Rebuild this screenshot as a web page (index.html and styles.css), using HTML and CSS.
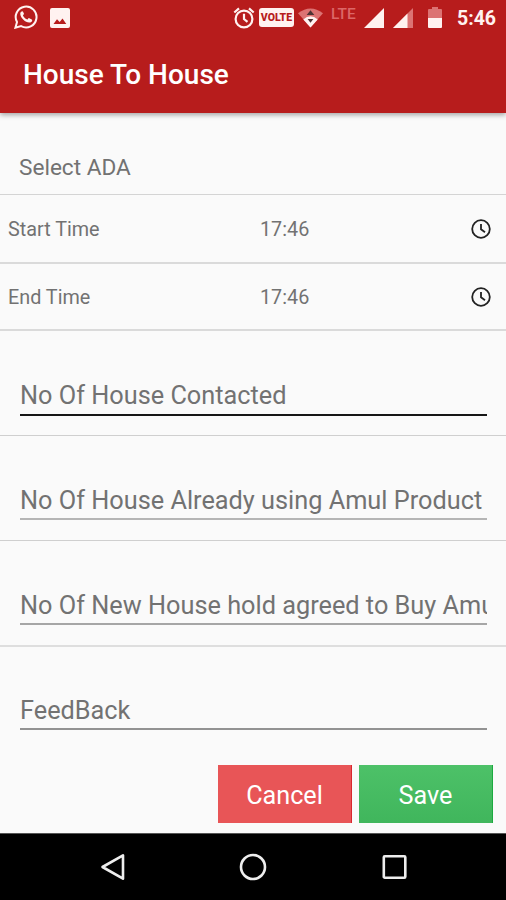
FILE: index.html
```html
<!DOCTYPE html>
<html lang="en">
<head>
<meta charset="utf-8">
<title>House To House</title>
<link rel="stylesheet" href="styles.css">
</head>
<body>
<div class="screen">
  <header class="top">
    <div class="status">
      <div class="notifications">
        <svg width="24" height="24" viewBox="0 0 24 24"><path d="M1.4 22.7 3 17A10.4 10.4 0 1 1 7.1 21.1Z" fill="none" stroke="currentColor" stroke-width="2"/><path d="M8.1 6.2c-1.2.4-2 1.6-1.8 3 .5 4 5 8.1 8.9 8.4 1.5.1 2.7-.8 3-2.2.1-.5 0-.8-.4-1l-2.5-1.2c-.4-.2-.7-.1-1 .3l-.8 1c-2.1-.8-3.7-2.3-4.6-4.1l.9-1.1c.2-.3.2-.5.1-.8L9 6.7c-.2-.4-.4-.6-.9-.5Z" fill="currentColor"/></svg>
        <svg width="20" height="20" viewBox="0 0 20 20"><path fill="currentColor" fill-rule="evenodd" d="M2 0H18Q20 0 20 2V18Q20 20 18 20H2Q0 20 0 18V2Q0 0 2 0ZM3.5 16H16.3L12.5 10.5 9.7 14 7 11.3Z"/></svg>
      </div>
      <div class="indicators">
        <svg width="22" height="22" viewBox="0 0 22 22" fill="none" stroke="currentColor" stroke-width="2.2"><circle cx="11" cy="12" r="8.4"/><path d="M11 6.8V12l3.5 2.8M1.3 5.5 6 1.4M16 1.4l4.7 4.1"/></svg>
        <span class="volte">VOLTE</span>
        <svg class="wifi" width="25" height="20" viewBox="0 0 26 20"><path d="M0 5Q13-5 26 5L13 20Z" fill="#dc7373"/><path d="M5.5 11.5Q13 5 20.5 11.5L13 20Z" fill="currentColor"/><path d="m13 2 4 5H9ZM10 11h6l-3 4Z" fill="#4d3435"/></svg>
        <span class="lte">LTE</span>
        <svg class="signal" width="20" height="20" viewBox="0 0 20 20"><path d="M0 20 20 0V20Z" fill="currentColor"/></svg>
        <svg class="signal2" width="20" height="20" viewBox="0 0 20 20"><path d="M0 20 20 0V20Z" fill="#dc7373"/><path d="M0 20 14.5 5.5V20Z" fill="currentColor"/></svg>
        <svg class="battery" width="14" height="21" viewBox="0 0 14 21"><path d="M0 3Q0 2 1 2H4V0H10V2H13Q14 2 14 3V11H0Z" fill="#dc7373"/><path d="M0 11H14V20Q14 21 13 21H1Q0 21 0 20Z" fill="currentColor"/></svg>
        <span class="clock">5:46</span>
      </div>
    </div>
    <h1 class="title">House To House</h1>
  </header>
  <main class="form">
    <div class="select">Select ADA</div>
    <div class="time start"><span>Start Time</span><span>17:46</span>
      <svg width="20" height="20" viewBox="0 0 20 20" fill="none" stroke="currentColor" stroke-width="1.8"><circle cx="10" cy="10" r="8.8"/><path d="M10 5V10.3L14 13.3"/></svg></div>
    <div class="time end"><span>End Time</span><span>17:46</span>
      <svg width="20" height="20" viewBox="0 0 20 20" fill="none" stroke="currentColor" stroke-width="1.8"><circle cx="10" cy="10" r="8.8"/><path d="M10 5V10.3L14 13.3"/></svg></div>
    <div class="field"><div class="input focused">No Of House Contacted</div></div>
    <div class="field"><div class="input">No Of House Already using Amul Product</div></div>
    <div class="field tall"><div class="input dark">No Of New House hold agreed to Buy Amul</div></div>
    <div class="field last"><div class="input darker">FeedBack</div></div>
    <div class="actions"><button class="btn cancel">Cancel</button><button class="btn save">Save</button></div>
  </main>
  <nav class="nav">
    <svg width="28" height="30" viewBox="0 0 28 30"><path d="M3.5 15 24 3.3V26.7Z"/></svg>
    <svg width="28" height="30" viewBox="0 0 28 30"><circle cx="14" cy="15" r="12"/></svg>
    <svg width="28" height="30" viewBox="0 0 28 30"><rect x="3.8" y="4.2" width="21.5" height="21.5" rx="1"/></svg>
  </nav>
</div>
</body>
</html>
```
FILE: styles.css
```css
* { box-sizing: border-box; }
body { margin: 0; font-family: Roboto, sans-serif; color: #727272; }
svg { display: block; flex: none; }
.screen { width: 506px; height: 900px; display: flex; flex-direction: column; background: #fafafa; overflow: hidden; }
.top { height: 113px; flex: none; background: #b71c1c; color: #fff; box-shadow: 0 2px 5px rgba(0,0,0,.35); }
.status { height: 36px; display: flex; justify-content: space-between; padding: 0 10px 0 14px; color: #fff2f0; }
.notifications { display: flex; gap: 12px; padding-top: 5px; }
.notifications svg + svg { margin-top: 3px; }
.indicators { display: flex; padding-top: 7px; }
.volte { width: 35px; height: 19px; margin: 1px 0 0 4px; border-radius: 3px; background: #fff2f0; color: #b71c1c; font-size: 10.5px; font-weight: 900; line-height: 19px; text-align: center; }
.wifi { margin: 1px 0 0 4px; }
.lte { width: 27px; margin: -2px 0 0 8px; color: #dc6767; font-size: 15.5px; line-height: 18px; font-weight: 500; }
.signal { margin: 1px 0 0 6px; }
.signal2 { margin: 1px 0 0 9px; }
.battery { margin-left: 15px; }
.clock { width: 39px; margin-left: 15px; font-size: 19.5px; font-weight: 700; line-height: 23px; }
.title { margin: 0; padding: 22px 23px 0; font-size: 28px; line-height: 34px; font-weight: 500; }
.form { flex: 1; }
.select { height: 82px; padding: 40px 19px 0; font-size: 22.6px; line-height: 30px; border-bottom: 1.5px solid #d4d4d4; }
.time { display: grid; grid-template-columns: 252px 211px 20px; align-items: center; padding: 0 0 0 8px; font-size: 19.8px; border-bottom: 2px solid #dadada; }
.time span { padding-top: 2px; }
.time svg { color: #222; }
.start { height: 69px; }
.end { height: 67px; }
.field { height: 105px; padding: 48px 19px 0 20px; border-bottom: 1px solid #cfcfcf; }
.tall { height: 106px; border-bottom: 2px solid #dedede; }
.last { height: 118px; padding-top: 47px; border: 0; }
.input { height: 36px; overflow: hidden; white-space: nowrap; font-size: 25.3px; line-height: 34px; border-bottom: 2px solid #b5b5b5; }
.focused { height: 37px; border-bottom-color: #161616; }
.dark { border-bottom-color: #a6a6a6; }
.darker { border-bottom-color: #929292; }
.actions { display: flex; justify-content: flex-end; gap: 7px; padding-right: 13px; }
.btn { width: 134px; height: 58px; padding: 3px 0 0; border: 0; color: #fff; font: 400 25.2px/30px Roboto, sans-serif; }
.cancel { background: #e85557; border-right: 1px solid #da2730; }
.save { background: linear-gradient(#4dc168, #40b65c); border-right: 1px solid #1caa40; }
.nav { height: 67px; flex: none; display: flex; justify-content: center; gap: 112.5px; padding-top: 18px; background: #000; border-top: 1px solid #555; }
.nav svg { fill: none; stroke: #eee; stroke-width: 2.6; stroke-linejoin: round; }
```
